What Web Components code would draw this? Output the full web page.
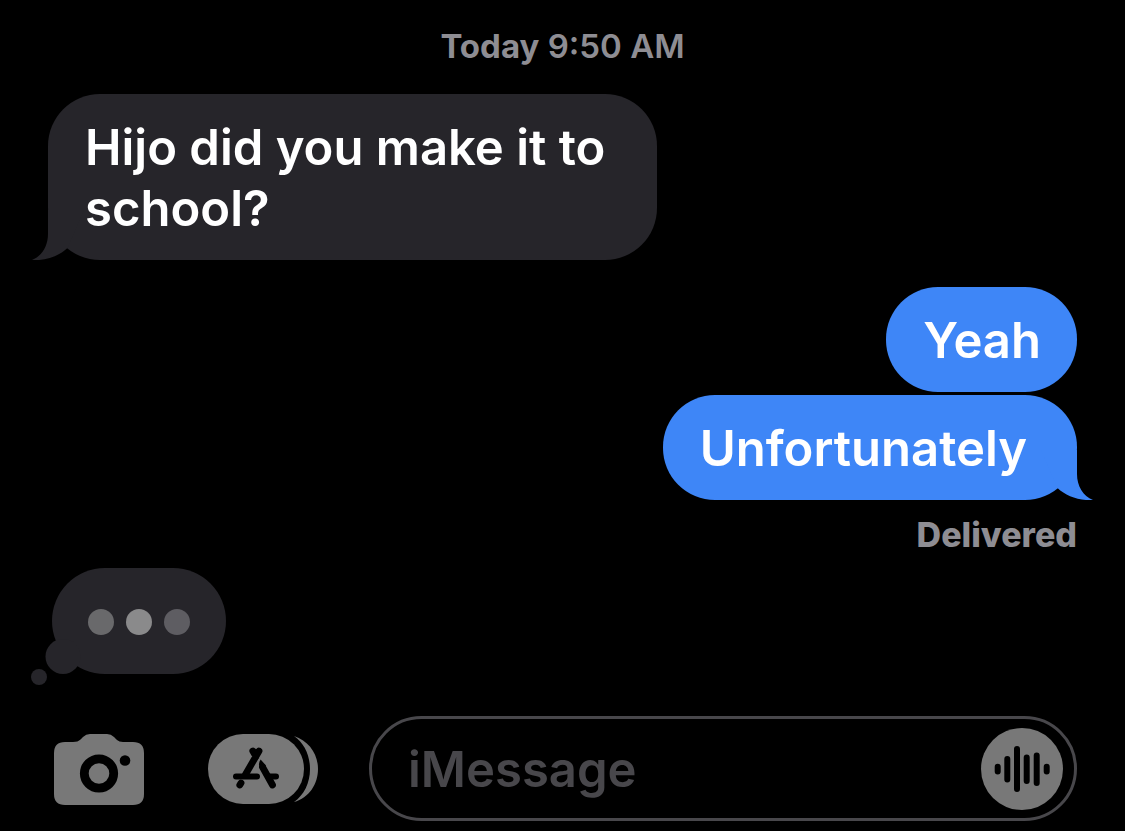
<!DOCTYPE html>
<html lang="en">
<head>
<meta charset="utf-8">
<meta name="viewport" content="width=device-width, initial-scale=1">
<title>Messages</title>
<style>
  html { background: #000; }
  body { margin: 0; background: #000; color: #fff; font: 600 49px/61px Inter, "Liberation Sans", sans-serif; }
</style>
</head>
<body>
<chat-screen>
  <chat-note align="center"><b>Today</b> 9:50 AM</chat-note>
  <chat-bubble from="them" tail>Hijo did you make it to school?</chat-bubble>
  <chat-group>
    <chat-bubble from="me">Yeah</chat-bubble>
    <chat-bubble from="me" tail>Unfortunately</chat-bubble>
  </chat-group>
  <chat-note align="end"><b>Delivered</b></chat-note>
  <typing-bubble></typing-bubble>
  <chat-composer slot="composer" placeholder="iMessage"></chat-composer>
</chat-screen>

<script>
const define = (name, html, setup) => {
  const template = document.createElement('template');
  template.innerHTML = html;
  customElements.define(name, class extends HTMLElement {
    constructor() {
      super();
      this.attachShadow({ mode: 'open' }).append(template.content.cloneNode(true));
    }
    connectedCallback() { if (setup) setup(this, this.shadowRoot); }
  });
};

define('chat-screen', `
  <style>
    :host { display: block; padding: 26px 48px 10px; }
    main { display: flex; flex-direction: column; }
    footer { margin-top: 42px; }
  </style>
  <main><slot></slot></main>
  <footer><slot name="composer"></slot></footer>
`);

define('chat-note', `
  <style>
    :host { display: block; font-size: 33px; font-weight: 600; line-height: 40px; color: #8e8d93; }
    :host([align="center"]) { text-align: center; margin-bottom: 28px; }
    :host([align="end"]) { text-align: right; margin: 15px 0 13px; font-size: 34px; }
    ::slotted(b) { font-weight: 700; }
    :host([align="end"]) ::slotted(b) { font-weight: 800; }
  </style>
  <slot></slot>
`);

define('chat-group', `
  <style>
    :host { display: flex; flex-direction: column; gap: 3px; margin-top: 27px; }
  </style>
  <slot></slot>
`);

define('chat-bubble', `
  <style>
    :host {
      display: block; position: relative; box-sizing: border-box;
      width: fit-content; max-width: 609px; padding: 23px 36px 21px 37px;
      border-radius: 52px; background: var(--fill); color: #fff;
    }
    :host([from="them"]) { --fill: #26252a; align-self: flex-start; }
    :host([from="me"]) { --fill: #3e86f7; align-self: flex-end; }
    :host([from="me"][tail]) { padding-right: 50px; }
    svg { display: none; position: absolute; bottom: 0; left: -16px; fill: var(--fill); }
    :host([tail]) svg { display: block; }
    :host([from="me"]) svg { left: auto; right: -16px; transform: scaleX(-1); }
    span { position: relative; }
  </style>
  <svg width="52" height="50" viewBox="0 0 52 50" aria-hidden="true">
    <path d="M16 0V24C16 36 10 46 0 50C14 51 27 46 35.500 38L52 0Z"/>
  </svg>
  <span><slot></slot></span>
`);

define('typing-bubble', `
  <style>
    :host {
      display: flex; position: relative; box-sizing: border-box; align-self: flex-start;
      gap: 12px; align-items: center; height: 106px; padding: 2px 36px 0; margin-left: 4px;
      border-radius: 53px; background: #26252a;
    }
    i { width: 26px; height: 26px; border-radius: 50%; background: #69696b; }
    i:nth-of-type(2) { background: #8a8a8b; }
    i:nth-of-type(3) { background: #5e5d62; }
    svg { position: absolute; left: -21px; bottom: -12px; fill: #26252a; }
  </style>
  <svg width="50" height="47" viewBox="0 0 50 47" aria-hidden="true">
    <circle cx="32" cy="17.500" r="17.500"/><circle cx="8" cy="38" r="8"/>
  </svg>
  <i></i><i></i><i></i>
`);

define('chat-composer', `
  <style>
    form { display: flex; align-items: center; margin: 0; padding-left: 6px; }
    button { flex: none; padding: 0; border: 0; background: none; color: #787878; cursor: pointer; }
    svg { display: block; }
    .apps { margin: 0 51px 0 64px; }
    .field {
      flex: 1; min-width: 0; box-sizing: border-box; display: flex; align-items: center;
      padding: 0 11px 0 36px; border: 3px solid #48474b; border-radius: 53px;
    }
    input {
      flex: 1; min-width: 0; height: 99px; padding: 2px 0 0; box-sizing: border-box; border: 0; outline: 0;
      background: none; color: #fff; font: inherit;
    }
    input::placeholder { color: #48474b; opacity: 1; }
  </style>
  <form>
    <button type="button" aria-label="Camera">
      <svg width="90" height="72" viewBox="0 -1 90 72">
        <path fill="currentColor" d="M11 8H19Q24 8 26.500 5.500L29 3Q32 0 36 0H53Q57 0 60 3L63 6Q65 8 69 8H79Q90 8 90 19V60Q90 71 79 71H11Q0 71 0 60V19Q0 8 11 8Z"/>
        <circle cx="45" cy="39.500" r="14.700" fill="none" stroke="#000" stroke-width="8.800"/>
        <circle cx="71" cy="26.500" r="5.300"/>
      </svg>
    </button>
    <button class="apps" type="button" aria-label="Apps">
      <svg width="110" height="70" viewBox="0 0 110 70">
        <rect width="96" height="70" rx="35" fill="currentColor"/>
        <path fill="currentColor" d="M86 2C101 7 110 20 110 35S101 64 86 68C96 61 102 49 102 35S96 9 86 2Z"/>
        <g fill="none" stroke="#000" stroke-width="6" stroke-linecap="round">
          <path d="M28 42.500H49M60 42.500H68"/>
          <path stroke-width="6.800" d="M51 17L37.500 40.500M44.800 17L48 22.500M54.500 33L64.500 51M33 49L31.800 51"/>
        </g>
        <path d="M52.600 25.500L58 31.500L52.500 35.500C50.500 32 50.500 28.500 52.600 25.500Z"/>
      </svg>
    </button>
    <div class="field">
      <input type="text" aria-label="Message">
      <button type="button" aria-label="Record audio">
        <svg width="82" height="82" viewBox="0 0 82 82">
          <circle cx="41" cy="41" r="41" fill="currentColor"/>
          <path fill="none" stroke="#000" stroke-width="6" stroke-linecap="round" d="M16.700 38.800V43.500M26.300 31V51.500M36 21V61M45.700 29.500V53M55.700 27.500V55M65.700 38.800V43.500"/>
        </svg>
      </button>
    </div>
  </form>
`, (host, root) => {
  root.querySelector('input').placeholder = host.getAttribute('placeholder') || '';
});
</script>
</body>
</html>
